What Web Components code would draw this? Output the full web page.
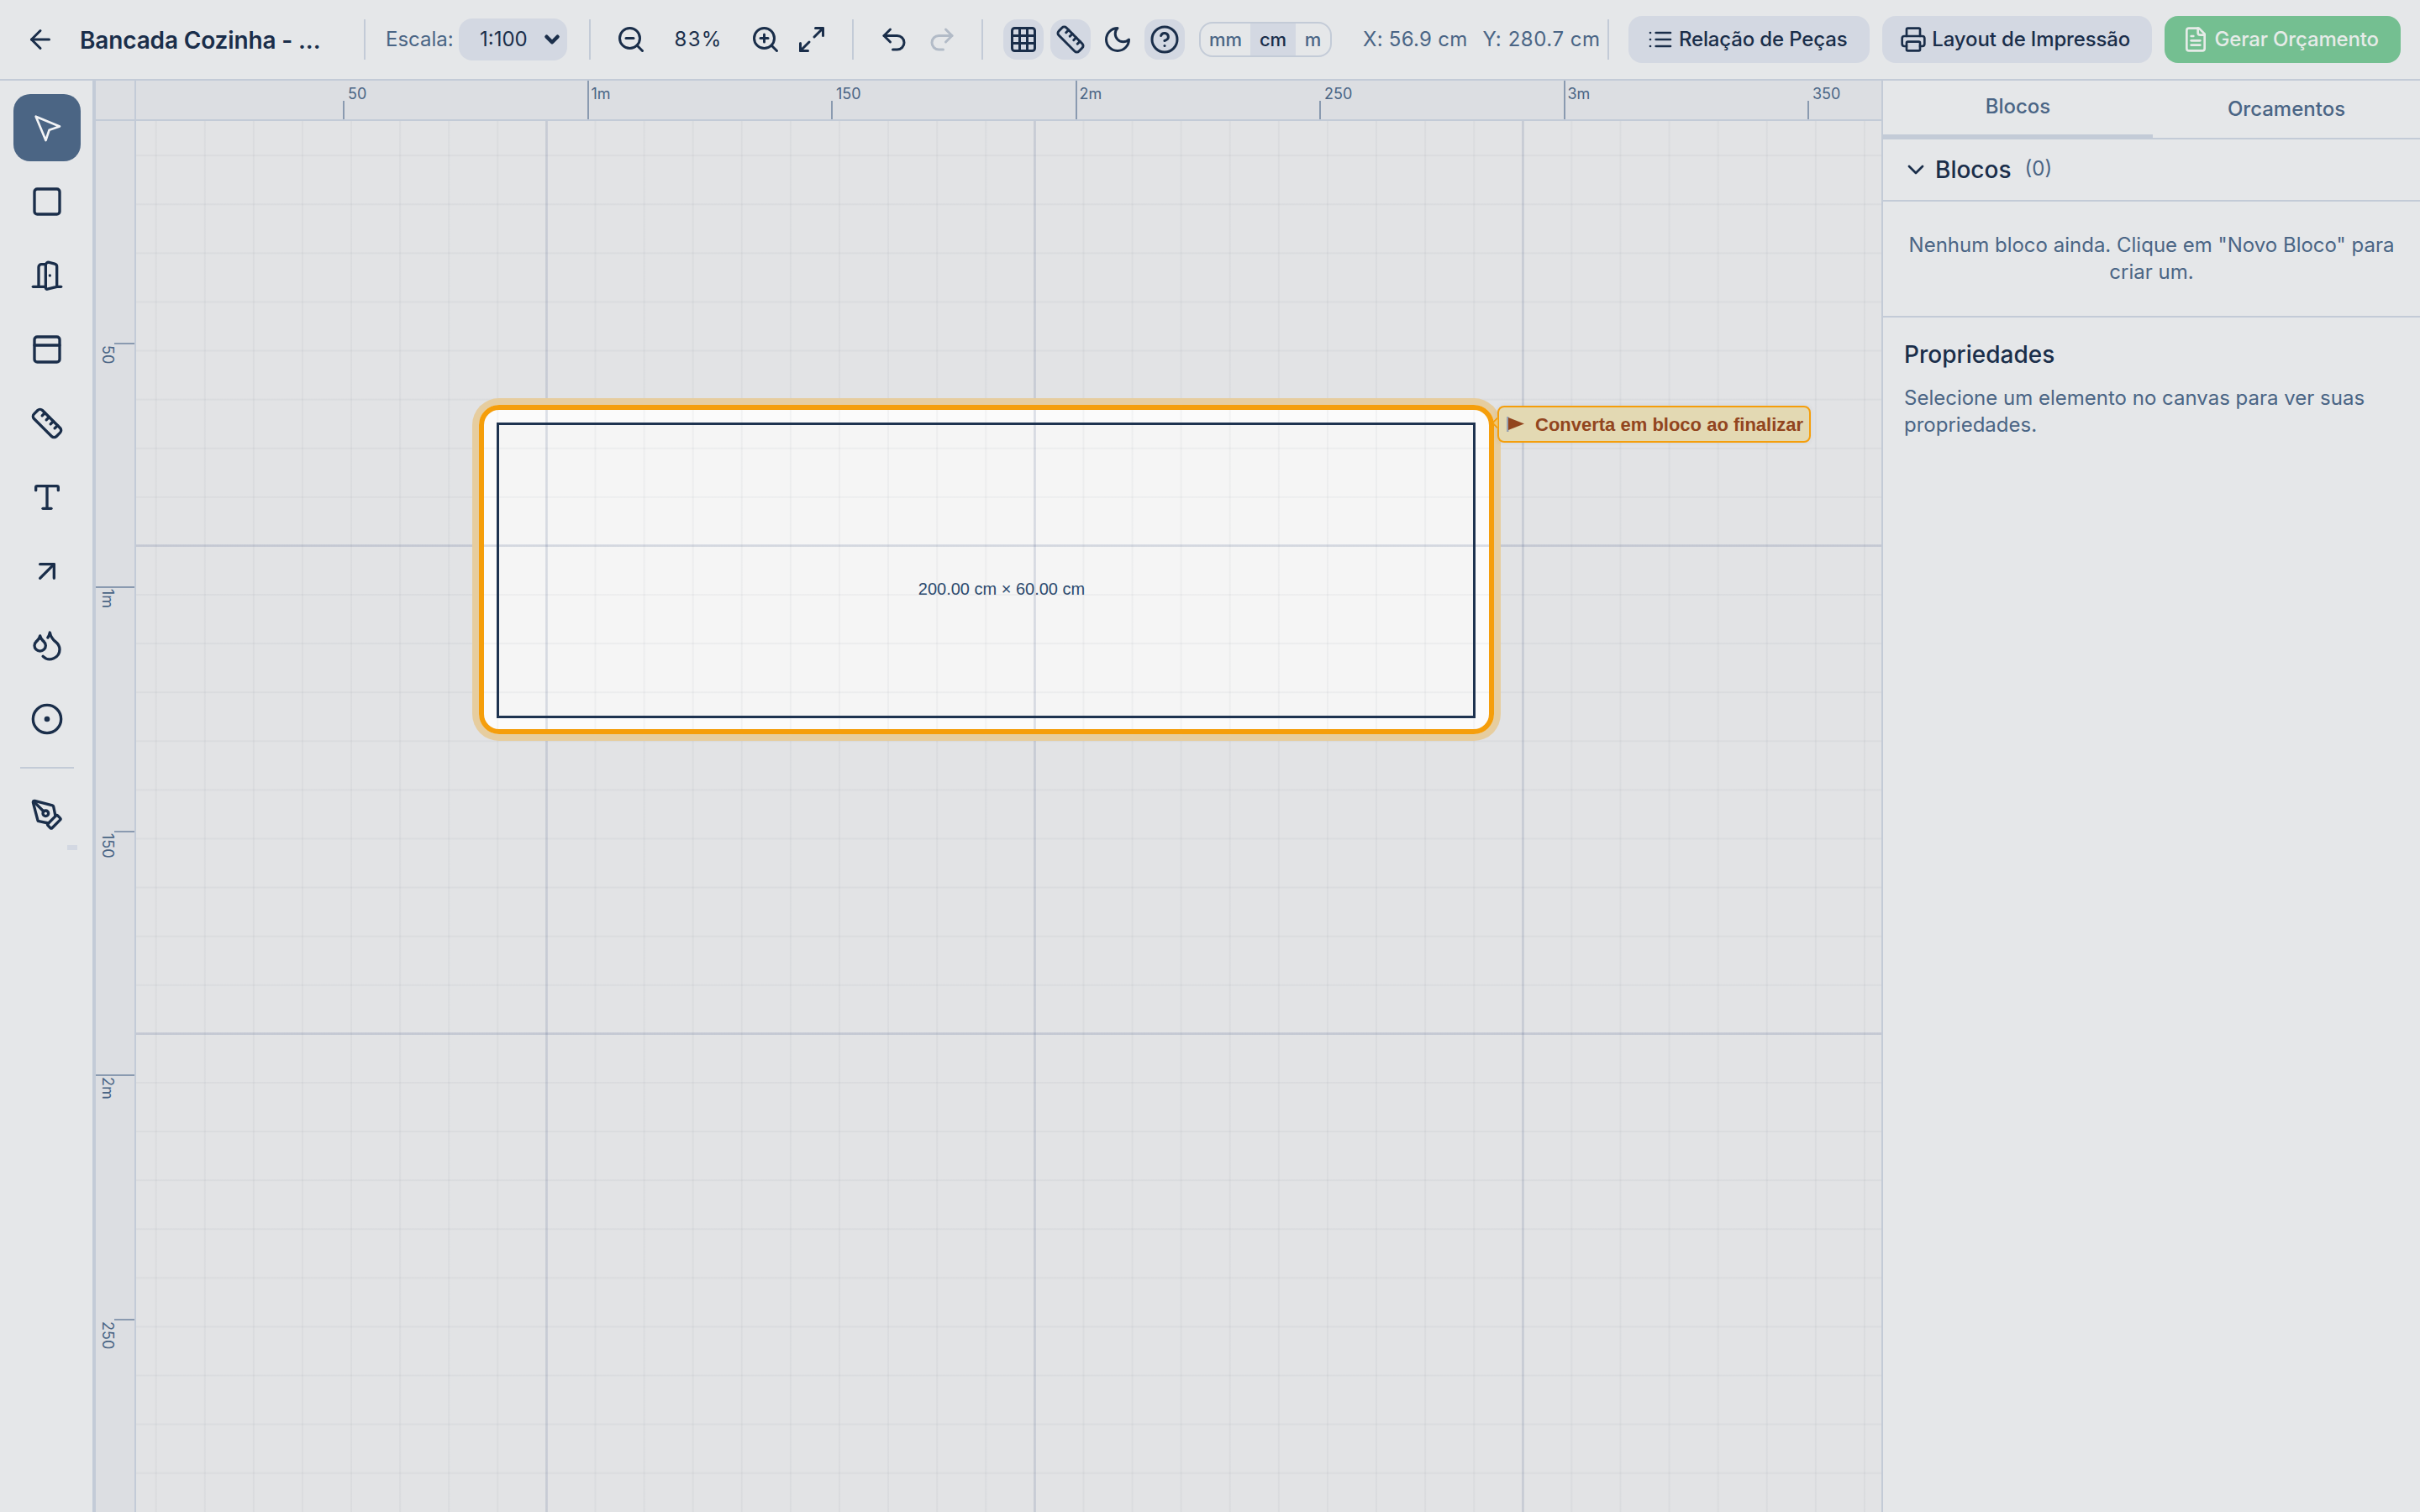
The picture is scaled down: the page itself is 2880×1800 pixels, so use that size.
<!DOCTYPE html>
<html lang="pt"><head><meta charset="utf-8"><title>Bancada Cozinha</title>
<style>
html,body{margin:0;padding:0;width:2880px;height:1800px;overflow:hidden;background:#e5e7e9;font-family:Inter,"Liberation Sans",sans-serif;color:#1a2e4a}
</style></head><body>
<app-shell></app-shell>
<script>
const P={
'arrow-left':'<path d="m12 19-7-7 7-7"/><path d="M19 12H5"/>',
'zoom-out':'<circle cx="11" cy="11" r="8"/><path d="m21 21-4.3-4.3"/><path d="M8 11h6"/>',
'zoom-in':'<circle cx="11" cy="11" r="8"/><path d="m21 21-4.3-4.3"/><path d="M11 8v6"/><path d="M8 11h6"/>',
'maximize':'<path d="M15 3h6v6"/><path d="m21 3-7 7"/><path d="m3 21 7-7"/><path d="M9 21H3v-6"/>',
'undo':'<path d="M9 14 4 9l5-5"/><path d="M4 9h10.5a5.5 5.5 0 0 1 5.5 5.5a5.5 5.5 0 0 1-5.5 5.5H11"/>',
'redo':'<path d="m15 14 5-5-5-5"/><path d="M20 9H9.5A5.5 5.5 0 0 0 4 14.5A5.5 5.5 0 0 0 9.5 20H13"/>',
'grid':'<rect x="3" y="3" width="18" height="18" rx="2"/><path d="M3 9h18"/><path d="M3 15h18"/><path d="M9 3v18"/><path d="M15 3v18"/>',
'ruler':'<path d="M21.3 15.3a2.4 2.4 0 0 1 0 3.4l-2.6 2.6a2.4 2.4 0 0 1-3.4 0L2.7 8.7a2.41 2.41 0 0 1 0-3.4l2.6-2.6a2.41 2.41 0 0 1 3.4 0Z"/><path d="m14.5 12.5 2-2"/><path d="m11.5 9.5 2-2"/><path d="m8.5 6.5 2-2"/><path d="m17.5 15.5 2-2"/>',
'moon':'<path d="M12 3a6 6 0 0 0 9 9 9 9 0 1 1-9-9Z"/>',
'help':'<circle cx="12" cy="12" r="10"/><path d="M9.09 9a3 3 0 0 1 5.83 1c0 2-3 3-3 3"/><path d="M12 17h.01"/>',
'list':'<path d="M3 12h.01"/><path d="M3 18h.01"/><path d="M3 6h.01"/><path d="M8 12h13"/><path d="M8 18h13"/><path d="M8 6h13"/>',
'printer':'<path d="M6 18H4a2 2 0 0 1-2-2v-5a2 2 0 0 1 2-2h16a2 2 0 0 1 2 2v5a2 2 0 0 1-2 2h-2"/><path d="M6 9V3a1 1 0 0 1 1-1h10a1 1 0 0 1 1 1v6"/><rect x="6" y="14" width="12" height="8" rx="1"/>',
'file':'<path d="M15 2H6a2 2 0 0 0-2 2v16a2 2 0 0 0 2 2h12a2 2 0 0 0 2-2V7Z"/><path d="M14 2v4a2 2 0 0 0 2 2h4"/><path d="M10 9H8"/><path d="M16 13H8"/><path d="M16 17H8"/>',
'pointer':'<path d="m4 4 7.07 17 2.51-7.39L21 11.07z"/>',
'square':'<rect x="3" y="3" width="18" height="18" rx="2"/>',
'door':'<g transform="translate(24 0) scale(-1 1)"><path d="M13 4h3a2 2 0 0 1 2 2v14"/><path d="M2 20h3"/><path d="M13 20h9"/><path d="M10 12v.01"/><path d="M13 4.562v16.157a1 1 0 0 1-1.242.97L5 20V5.562a2 2 0 0 1 1.515-1.94l4-1A2 2 0 0 1 13 4.561Z"/></g>',
'panel':'<rect x="3" y="3" width="18" height="18" rx="2"/><path d="M3 9h18"/>',
'type':'<path d="M12 4v16"/><path d="M4 7V5a1 1 0 0 1 1-1h14a1 1 0 0 1 1 1v2"/><path d="M9 20h6"/>',
'arrow-ur':'<path d="M7 7h10v10"/><path d="M7 17 17 7"/>',
'drops':'<path d="M7 16.3c2.2 0 4-1.83 4-4.05 0-1.16-.57-2.26-1.71-3.19S7.29 6.75 7 5.3c-.29 1.45-1.14 2.84-2.29 3.76S3 11.1 3 12.25c0 2.22 1.8 4.05 4 4.05z"/><path d="M12.56 6.6A10.97 10.97 0 0 0 14 3.02c.5 2.5 2 4.9 4 6.5s3 3.5 3 5.5a6.98 6.98 0 0 1-11.91 4.97"/>',
'dot':'<circle cx="12" cy="12" r="10"/><circle cx="12" cy="12" r="1"/>',
'pen':'<path d="M15.707 21.293a1 1 0 0 1-1.414 0l-1.586-1.586a1 1 0 0 1 0-1.414l5.586-5.586a1 1 0 0 1 1.414 0l1.586 1.586a1 1 0 0 1 0 1.414z"/><path d="m18 13-1.375-6.874a1 1 0 0 0-.746-.776L3.235 2.028a1 1 0 0 0-1.207 1.207L5.35 15.879a1 1 0 0 0 .776.746L13 18"/><path d="m2.3 2.3 7.286 7.286"/><circle cx="11" cy="11" r="2"/>',
'chev':'<path d="m6 9 6 6 6-6"/>'
};
class UiIcon extends HTMLElement{connectedCallback(){
 const s=+this.getAttribute('size')||36,w=this.getAttribute('sw')||2;
 this.attachShadow({mode:'open'}).innerHTML=`<style>:host{display:inline-flex;width:${s}px;height:${s}px;flex:none}svg{display:block}</style><svg width="${s}" height="${s}" viewBox="0 0 24 24" fill="none" stroke="currentColor" stroke-width="${w}" stroke-linecap="round" stroke-linejoin="round">${P[this.getAttribute('name')]}</svg>`;
}}
customElements.define('ui-icon',UiIcon);

class ToolBtn extends HTMLElement{connectedCallback(){
 this.attachShadow({mode:'open'}).innerHTML=`<style>:host{display:flex;align-items:center;justify-content:center;flex:none;width:48px;height:48px;border-radius:16px;color:#1a2e4a}
 :host([on]){background:#d3d8e2}</style><slot></slot>`;
}}
customElements.define('tool-btn',ToolBtn);

class TbSep extends HTMLElement{connectedCallback(){
 this.attachShadow({mode:'open'}).innerHTML=`<style>:host{display:block;flex:none;width:2px;height:48px;background:#c3cbd7}</style>`;
}}
customElements.define('tb-sep',TbSep);

class ActBtn extends HTMLElement{connectedCallback(){
 this.attachShadow({mode:'open'}).innerHTML=`<style>:host{display:flex;align-items:center;justify-content:center;gap:6px;flex:none;height:56px;border-radius:16px;background:#d3d8e2;color:#1a2e4a;font:500 24px/32px Inter,sans-serif;letter-spacing:-.15px;box-sizing:border-box;padding-right:4px}
 :host([go]){background:#74bf91;color:#e6ebe8}</style><slot></slot>`;
}}
customElements.define('act-btn',ActBtn);

class UnitSwitch extends HTMLElement{connectedCallback(){
 this.attachShadow({mode:'open'}).innerHTML=`<style>:host{display:flex;flex:none;width:158px;height:42px;box-sizing:border-box;border:2px solid #c3cbd7;border-radius:16px;overflow:hidden;font:500 22px/38px Inter,sans-serif;color:#4a6585}
 span{display:block;text-align:center}.a{width:59px}.b{width:54px;background:#d3d8e2;color:#1a2e4a}.c{flex:1}</style><span class="a">mm</span><span class="b">cm</span><span class="c">m</span>`;
}}
customElements.define('unit-switch',UnitSwitch);

class TopBar extends HTMLElement{connectedCallback(){
 this.attachShadow({mode:'open'}).innerHTML=`<style>
 :host{display:flex;align-items:center;flex:none;height:94px;border-bottom:2px solid #c3cbd7;font-family:Inter,sans-serif;color:#1a2e4a;padding-left:30px;box-sizing:content-box}
 .t{font:600 28px/36px Inter,sans-serif;letter-spacing:-.15px;margin-left:29px;width:338px;flex:none;white-space:nowrap;position:relative;top:1px}
 .l{font:400 24px/32px Inter,sans-serif;color:#4a6585;margin-left:24px;width:87px;flex:none}
 .sel{display:flex;align-items:center;justify-content:space-between;flex:none;width:129px;height:50px;box-sizing:border-box;padding:0 5px 0 25px;background:#d3d8e2;border-radius:16px;font:400 24px/32px Inter,sans-serif}
 .z{font:400 24px/32px Inter,sans-serif;width:124px;text-align:center;flex:none;letter-spacing:1.2px}
 .c{font:400 24px/32px Inter,sans-serif;color:#4a6585;flex:none;white-space:nowrap;letter-spacing:.27px}
 tb-sep.m{margin-left:26px}
 </style>
 <ui-icon name="arrow-left"></ui-icon>
 <span class="t">Bancada Cozinha - ...</span>
 <tb-sep></tb-sep>
 <span class="l">Escala:</span>
 <span class="sel">1:100<ui-icon name="chev" size="26" sw="4.2"></ui-icon></span>
 <tb-sep class="m"></tb-sep>
 <ui-icon name="zoom-out" style="margin-left:30px"></ui-icon>
 <span class="z">83%</span>
 <ui-icon name="zoom-in"></ui-icon>
 <ui-icon name="maximize" style="margin-left:19px"></ui-icon>
 <tb-sep style="margin-left:30px"></tb-sep>
 <ui-icon name="undo" style="margin-left:30px"></ui-icon>
 <ui-icon name="redo" style="margin-left:21px;color:#b2bbc7"></ui-icon>
 <tb-sep style="margin-left:29px"></tb-sep>
 <tool-btn on style="margin-left:24px"><ui-icon name="grid"></ui-icon></tool-btn>
 <tool-btn on style="margin-left:8px"><ui-icon name="ruler"></ui-icon></tool-btn>
 <tool-btn style="margin-left:8px"><ui-icon name="moon"></ui-icon></tool-btn>
 <tool-btn on style="margin-left:8px"><ui-icon name="help"></ui-icon></tool-btn>
 <unit-switch style="margin-left:17px"></unit-switch>
 <span class="c" style="margin-left:37px">X: 56.9 cm</span>
 <span class="c" style="margin-left:18px;letter-spacing:.55px">Y: 280.7 cm</span>
 <tb-sep style="margin-left:8px"></tb-sep>
 <act-btn style="margin-left:23px;width:287px"><ui-icon name="list" size="32"></ui-icon>Relação de Peças</act-btn>
 <act-btn style="margin-left:15px;width:321px"><ui-icon name="printer" size="32"></ui-icon>Layout de Impressão</act-btn>
 <act-btn go style="margin-left:15px;width:281px"><ui-icon name="file" size="32"></ui-icon>Gerar Orçamento</act-btn>`;
}}
customElements.define('top-bar',TopBar);

class RailBtn extends HTMLElement{connectedCallback(){
 const on=this.hasAttribute('on');
 this.attachShadow({mode:'open'}).innerHTML=`<style>:host{display:flex;align-items:center;justify-content:center;width:80px;height:80px;flex:none;border-radius:20px;color:#1a2e4a}
 :host([on]){background:#4b6584;color:#f3f4f6}</style><ui-icon name="${this.getAttribute('name')}" size="40" sw="${on?1.6:2}"></ui-icon>`;
}}
customElements.define('rail-btn',RailBtn);

class SideRail extends HTMLElement{connectedCallback(){
 this.attachShadow({mode:'open'}).innerHTML=`<style>:host{display:flex;flex-direction:column;align-items:flex-start;gap:8px;flex:none;width:94px;padding:16px 0 0 16px;box-sizing:content-box;border-right:4px solid #c3cbd7}
 hr{width:64px;height:2px;border:0;background:#c3cbd7;margin:9px 0 7px 8px}
 .k{width:12px;height:6px;background:#d3d8e2;margin:-12px 0 0 64px}
 </style>
 <rail-btn on name="pointer"></rail-btn><rail-btn name="square"></rail-btn><rail-btn name="door"></rail-btn><rail-btn name="panel"></rail-btn><rail-btn name="ruler"></rail-btn><rail-btn name="type"></rail-btn><rail-btn name="arrow-ur"></rail-btn><rail-btn name="drops"></rail-btn><rail-btn name="dot"></rail-btn>
 <hr><rail-btn name="pen"></rail-btn><span class="k"></span>`;
}}
customElements.define('side-rail',SideRail);

const TICKS=[[50,0],['1m',1],[150,0],['2m',1],[250,0],['3m',1],[350,0]];
class HRuler extends HTMLElement{connectedCallback(){
 const t=TICKS.map(([l,m],i)=>{const x=117.5+290.5*(i+1)-114;
  return `<i class="${m?'M':'m'}" style="left:${x}px"></i><b style="left:${x+(m?5:6)}px">${l}</b>`}).join('');
 this.attachShadow({mode:'open'}).innerHTML=`<style>:host{display:block;flex:none;height:46px;background:#dcdee2;border-bottom:2px solid #c3cbd7;position:relative;overflow:hidden}
 .corner{position:absolute;left:0;top:0;width:46px;height:46px;border-right:2px solid #c3cbd7;background:#dcdee2}
 i{position:absolute;width:2px;bottom:0;background:#8a9ab0}i.m{height:22px}i.M{height:46px}
 b{position:absolute;top:6px;font:400 18px/20px Inter,sans-serif;color:#4a6585}</style><div class="corner"></div>${t}`;
}}
customElements.define('h-ruler',HRuler);

class VRuler extends HTMLElement{connectedCallback(){
 const labels=[[50,0],['1m',1],[150,0],['2m',1],[250,0]];
 const t=labels.map(([l,m],i)=>{const y=117+290.5*(i+1)-144;
  return `<i class="${m?'M':'m'}" style="top:${y}px"></i><b style="top:${y+3}px">${l}</b>`}).join('');
 this.attachShadow({mode:'open'}).innerHTML=`<style>:host{display:block;flex:none;width:46px;background:#dcdee2;border-right:2px solid #c3cbd7;position:relative;overflow:hidden}
 i{position:absolute;height:2px;right:0;background:#8a9ab0}i.m{width:24px}i.M{width:46px}
 b{position:absolute;left:4px;writing-mode:vertical-rl;font:400 18px/20px Inter,sans-serif;color:#4a6585}</style>${t}`;
}}
customElements.define('v-ruler',VRuler);

class DrawCanvas extends HTMLElement{connectedCallback(){
 this.attachShadow({mode:'open'}).innerHTML=`<style>
 :host{display:block;flex:1;position:relative;overflow:hidden;background:#e2e3e5}
 .fill{position:absolute;left:408px;top:338px;width:1208px;height:392px;background:#fbfbfb;border-radius:24px}
 .in{position:absolute;left:21px;top:21px;width:1165px;height:352px;background:#f5f5f5}
 .grid{position:absolute;inset:0;background-image:
   linear-gradient(to right,rgba(70,90,140,.13) 3px,transparent 3px),
   linear-gradient(to bottom,rgba(70,90,140,.15) 3px,transparent 3px),
   linear-gradient(to right,rgba(50,60,80,.045) 2px,transparent 2px),
   linear-gradient(to bottom,rgba(50,60,80,.045) 2px,transparent 2px);
  background-size:581px 100%,100% 581px,58.1px 100%,100% 58.1px;
  background-position:487px 0,0 504px,22.7px 0,0 40.2px}
 .ring{position:absolute;left:408px;top:338px;width:1208px;height:392px;box-sizing:border-box;border:6px solid #f59e0b;border-radius:24px;box-shadow:0 0 0 8px #e6cd9f}
 .nav{position:absolute;left:429px;top:359px;width:1165px;height:352px;box-sizing:border-box;border:3px solid #1e3350}
 .dim{position:absolute;left:930px;top:546px;width:200px;text-align:center;white-space:nowrap;font:400 20px/22px "Liberation Sans",Arial,sans-serif;color:#2c4a6e}
 .tip{position:absolute;left:1620px;top:339px;width:373px;height:44px;box-sizing:border-box;border:2px solid #f59e0b;border-radius:8px;background:#e3d9b3;box-shadow:0 0 6px rgba(30,50,90,.08);display:flex;align-items:center;padding-left:9px;gap:12px;font:700 22px/26px "Liberation Sans",Arial,sans-serif;color:#92451e;white-space:nowrap}
 .tip::before{content:"";position:absolute;left:-7px;top:13px;width:11px;height:11px;background:#efc878;border-left:2px solid #f59e0b;border-bottom:2px solid #f59e0b;transform:rotate(45deg);box-sizing:border-box;clip-path:polygon(0 0,100% 100%,0 100%)}
 .tip svg{display:block;flex:none}
 .tip span{position:relative;top:1px}
 </style>
 <div class="fill"><div class="in"></div></div>
 <div class="grid"></div>
 <div class="ring"></div>
 <div class="nav"></div>
 <div class="dim">200.00 cm × 60.00 cm</div>
 <div class="tip"><svg width="22" height="18" viewBox="0 0 22 18"><rect x="0" y="0" width="2.5" height="18" fill="#9aa3b2"/><path d="M2 1 21 8.5 2 16z" fill="#92451e"/></svg><span>Converta em bloco ao finalizar</span></div>`;
}}
customElements.define('draw-canvas',DrawCanvas);

class RightPanel extends HTMLElement{connectedCallback(){
 this.attachShadow({mode:'open'}).innerHTML=`<style>
 :host{display:flex;flex-direction:column;flex:none;width:639px;border-left:2px solid #c3cbd7;font-family:Inter,sans-serif;color:#1a2e4a;background:#e5e7e9}
 .tabs{display:flex;height:68px;flex:none;border-bottom:2px solid #c3cbd7;font:500 24px/32px Inter,sans-serif;color:#4a6585}
 .tabs div{display:flex;align-items:center;justify-content:center;box-sizing:border-box}
 .a{width:321px;height:69px;padding-bottom:2px;border-bottom:5px solid #c3cbd7}
 .b{flex:1;height:68px}
 .h{display:flex;align-items:center;height:74px;box-sizing:border-box;padding-left:23px;border-bottom:2px solid #c3cbd7;font:500 28px/32px Inter,sans-serif;flex:none}
 .h ui-icon{margin-right:7px}
 .n{font:400 24px/32px Inter,sans-serif;color:#4a6585;margin-left:16px;position:relative;top:-1px}
 .e{height:138px;flex:none;box-sizing:border-box;padding:36px 24px 0;text-align:center;border-bottom:2px solid #c3cbd7;font:400 24px/32px Inter,sans-serif;color:#4a6585}
 .p{padding:26px 25px 0}
 h3{margin:0;font:500 28px/36px Inter,sans-serif}
 p{margin:18px 0 0;font:400 24px/32px Inter,sans-serif;color:#4a6585}
 </style>
 <div class="tabs"><div class="a">Blocos</div><div class="b">Orcamentos</div></div>
 <div class="h"><ui-icon name="chev" size="32" sw="2"></ui-icon>Blocos<span class="n">(0)</span></div>
 <div class="e">Nenhum bloco ainda. Clique em "Novo Bloco" para criar um.</div>
 <div class="p"><h3>Propriedades</h3><p>Selecione um elemento no canvas para ver suas propriedades.</p></div>`;
}}
customElements.define('right-panel',RightPanel);

class AppShell extends HTMLElement{connectedCallback(){
 this.attachShadow({mode:'open'}).innerHTML=`<style>
 :host{display:flex;flex-direction:column;width:2880px;height:1800px;overflow:hidden}
 .main{flex:1;display:flex;min-height:0}
 .work{flex:1;display:flex;flex-direction:column;min-width:0}
 .below{flex:1;display:flex;min-height:0}
 </style>
 <top-bar></top-bar>
 <div class="main"><side-rail></side-rail>
  <div class="work"><h-ruler></h-ruler><div class="below"><v-ruler></v-ruler><draw-canvas></draw-canvas></div></div>
  <right-panel></right-panel>
 </div>`;
}}
customElements.define('app-shell',AppShell);
</script>
</body></html>
